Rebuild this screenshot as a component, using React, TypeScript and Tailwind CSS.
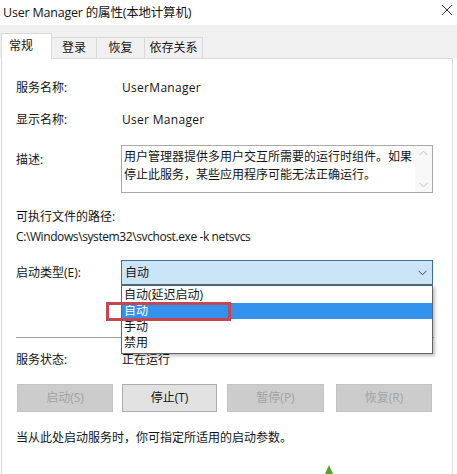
import React from "react";

const font = { fontFamily: '"Open Sans","Noto Sans CJK SC",sans-serif' };

function Chev({ className = "" }: { className?: string }) {
  return (
    <svg width="9" height="6" viewBox="0 0 9 6" className={className}>
      <path d="M0.5 0.8 L4.5 4.8 L8.5 0.8" fill="none" stroke="currentColor" strokeWidth="1" />
    </svg>
  );
}

export default function App() {
  const items = ["自动(延迟启动)", "自动", "手动", "禁用"];
  return (
    <div
      className="relative w-[457px] h-[474px] overflow-hidden bg-white text-[12px] text-[#141414] flex flex-col"
      style={font}
    >
      {/* title bar */}
      <div className="h-[25px] flex items-center justify-between pl-[3px] pr-[3px] shrink-0">
        <span className="text-[12.5px] leading-none pt-[1px] tracking-[-0.2px]">User Manager 的属性(本地计算机)</span>
        <svg width="12" height="12" viewBox="0 0 12 12" className="mr-[1px] mb-[5px]">
          <path d="M1 1 L11 11 M11 1 L1 11" stroke="#333" strokeWidth="1" />
        </svg>
      </div>

      {/* tab bar */}
      <div className="h-[33px] bg-[#f0f0f0] flex items-end shrink-0 relative">
        <div className="ml-[1px] w-[51px] h-[26px] bg-white border border-b-0 border-[#d9d9d9] flex items-center pl-[7px] relative z-10 mb-[-1px] pb-[1px]">
          常规
        </div>
        <div className="w-[45px] h-[21px] border border-l-0 border-b-0 border-[#d9d9d9] flex items-center justify-center">
          登录
        </div>
        <div className="w-[48px] h-[21px] border border-l-0 border-b-0 border-[#d9d9d9] flex items-center justify-center">
          恢复
        </div>
        <div className="w-[58px] h-[21px] border border-l-0 border-b-0 border-[#d9d9d9] flex items-center justify-center">
          依存关系
        </div>
      </div>

      {/* panel */}
      <div className="ml-[1px] w-[452px] flex-1 border border-b-0 border-[#d9d9d9] pl-[14px] flex flex-col">
        <div className="h-[21px] shrink-0" />
        <div className="h-[16px] flex items-center">
          <span className="w-[106px]">服务名称:</span>
          <span className="tracking-[0.3px]">UserManager</span>
        </div>
        <div className="h-[16px] mt-[16px] flex items-center">
          <span className="w-[106px]">显示名称:</span>
          <span className="tracking-[0.3px]">User Manager</span>
        </div>
        <div className="mt-[17px] flex items-start">
          <span className="w-[105px] h-[16px] mt-[7px] flex items-center">描述:</span>
          <div className="w-[312px] h-[48px] border border-[#a9a9a9] flex">
            <div className="flex-1 pl-[2px] pt-[2px] leading-[18px] text-[12px]">
              用户管理器提供多用户交互所需要的运行时组件。如果停止此服务，某些应用程序可能无法正确运行。
            </div>
            <div className="w-[17px] bg-[#f8f8f8] flex flex-col items-center justify-between py-[4px] text-[#c4c4c4]">
              <Chev className="rotate-180" />
              <Chev />
            </div>
          </div>
        </div>
        <div className="h-[16px] mt-[16px] flex items-center">可执行文件的路径:</div>
        <div className="h-[16px] mt-[4px] flex items-center text-[12px] tracking-[-0.4px]">C:\Windows\system32\svchost.exe -k netsvcs</div>
        <div className="mt-[15px] flex items-center">
          <span className="w-[105px]">启动类型(E):</span>
          <div className="w-[312px] h-[25px] bg-[#cce4f7] border border-[#3d6f8f] flex items-center justify-between pl-[3px] pr-[5px]">
            <span>自动</span>
            <Chev className="text-[#444]" />
          </div>
        </div>
        <div className="mt-[52px] h-px w-[418px] bg-[#a0a0a0]" />
        <div className="h-[16px] mt-[14px] flex items-center">
          <span className="w-[106px]">服务状态:</span>
          <span>正在运行</span>
        </div>
        <div className="mt-[16px] flex h-[28px]">
          <div className="ml-[1px] w-[96px] bg-[#cccccc] border border-[#c4c4c4] flex items-center justify-center text-[#a3a3a3]">
            启动(S)
          </div>
          <div className="ml-[9px] w-[95px] bg-[#e1e1e1] border border-[#adadad] flex items-center justify-center">
            停止(T)
          </div>
          <div className="ml-[10px] w-[97px] bg-[#cccccc] border border-[#c4c4c4] flex items-center justify-center text-[#a3a3a3]">
            暂停(P)
          </div>
          <div className="ml-[12px] w-[96px] bg-[#cccccc] border border-[#c4c4c4] flex items-center justify-center text-[#a3a3a3]">
            恢复(R)
          </div>
        </div>
        <div className="h-[16px] mt-[18px] flex items-center">当从此处启动服务时，你可指定所适用的启动参数。</div>
      </div>

      {/* dropdown list overlay */}
      <div className="absolute left-[121px] top-[285px] w-[312px] h-[69px] bg-white border border-[#646464] pt-px shadow-[2px_2px_3px_rgba(0,0,0,0.25)] z-20">
        {items.map((t, i) => (
          <div
            key={t}
            className={
              i === 1
                ? "h-[16px] flex items-center pl-[2px] bg-[#3392ee] text-white"
                : "h-[16px] flex items-center pl-[2px]"
            }
          >
            {t}
          </div>
        ))}
      </div>

      {/* red highlight box */}
      <div className="absolute left-[106px] top-[302px] w-[125px] h-[19px] border-[3px] border-[#c4474f] z-30" />

      {/* watermark tip */}
      <div className="absolute left-[325px] top-[465px] w-0 h-0 border-l-[4px] border-r-[4px] border-b-[9px] border-l-transparent border-r-transparent border-b-[#5aa02c]" />
    </div>
  );
}
